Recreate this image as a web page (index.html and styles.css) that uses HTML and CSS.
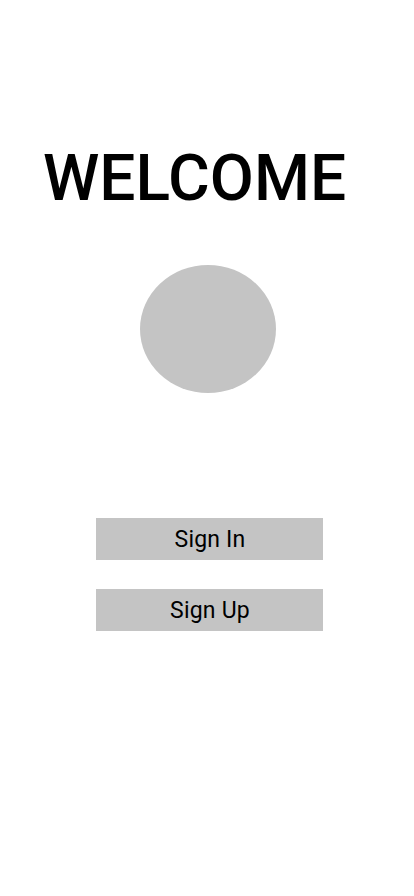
FILE: index.html
```html
<!DOCTYPE html>
<html>
<head>
<meta charset="utf-8">
<link rel="stylesheet" href="styles.css">
</head>
<body>
<main class="screen">
  <h1 class="title">WELCOME</h1>
  <div class="avatar"></div>
  <div class="actions">
    <button class="btn">Sign In</button>
    <button class="btn">Sign Up</button>
  </div>
</main>
</body>
</html>
```
FILE: styles.css
```css
html, body {
  margin: 0;
  padding: 0;
  background: #ffffff;
}
.screen {
  width: 414px;
  height: 896px;
  display: flex;
  flex-direction: column;
  font-family: Roboto, "Noto Sans", sans-serif;
}
.title {
  margin: 141px 0 0 43px;
  font-size: 64px;
  font-weight: 500;
  line-height: 75px;
  color: #000;
  letter-spacing: 0;
}
.avatar {
  width: 136px;
  height: 128px;
  border-radius: 50%;
  background: #c4c4c4;
  margin: 49px 0 0 140px;
}
.actions {
  display: flex;
  flex-direction: column;
  gap: 29px;
  margin: 125px 0 0 96px;
}
.btn {
  width: 227px;
  height: 42px;
  border: none;
  padding: 0 0 0 1px;
  background: #c4c4c4;
  font-family: Roboto, "Noto Sans", sans-serif;
  font-size: 23px;
  font-weight: 450;
  letter-spacing: 0.2px;
  color: #000;
}
```
